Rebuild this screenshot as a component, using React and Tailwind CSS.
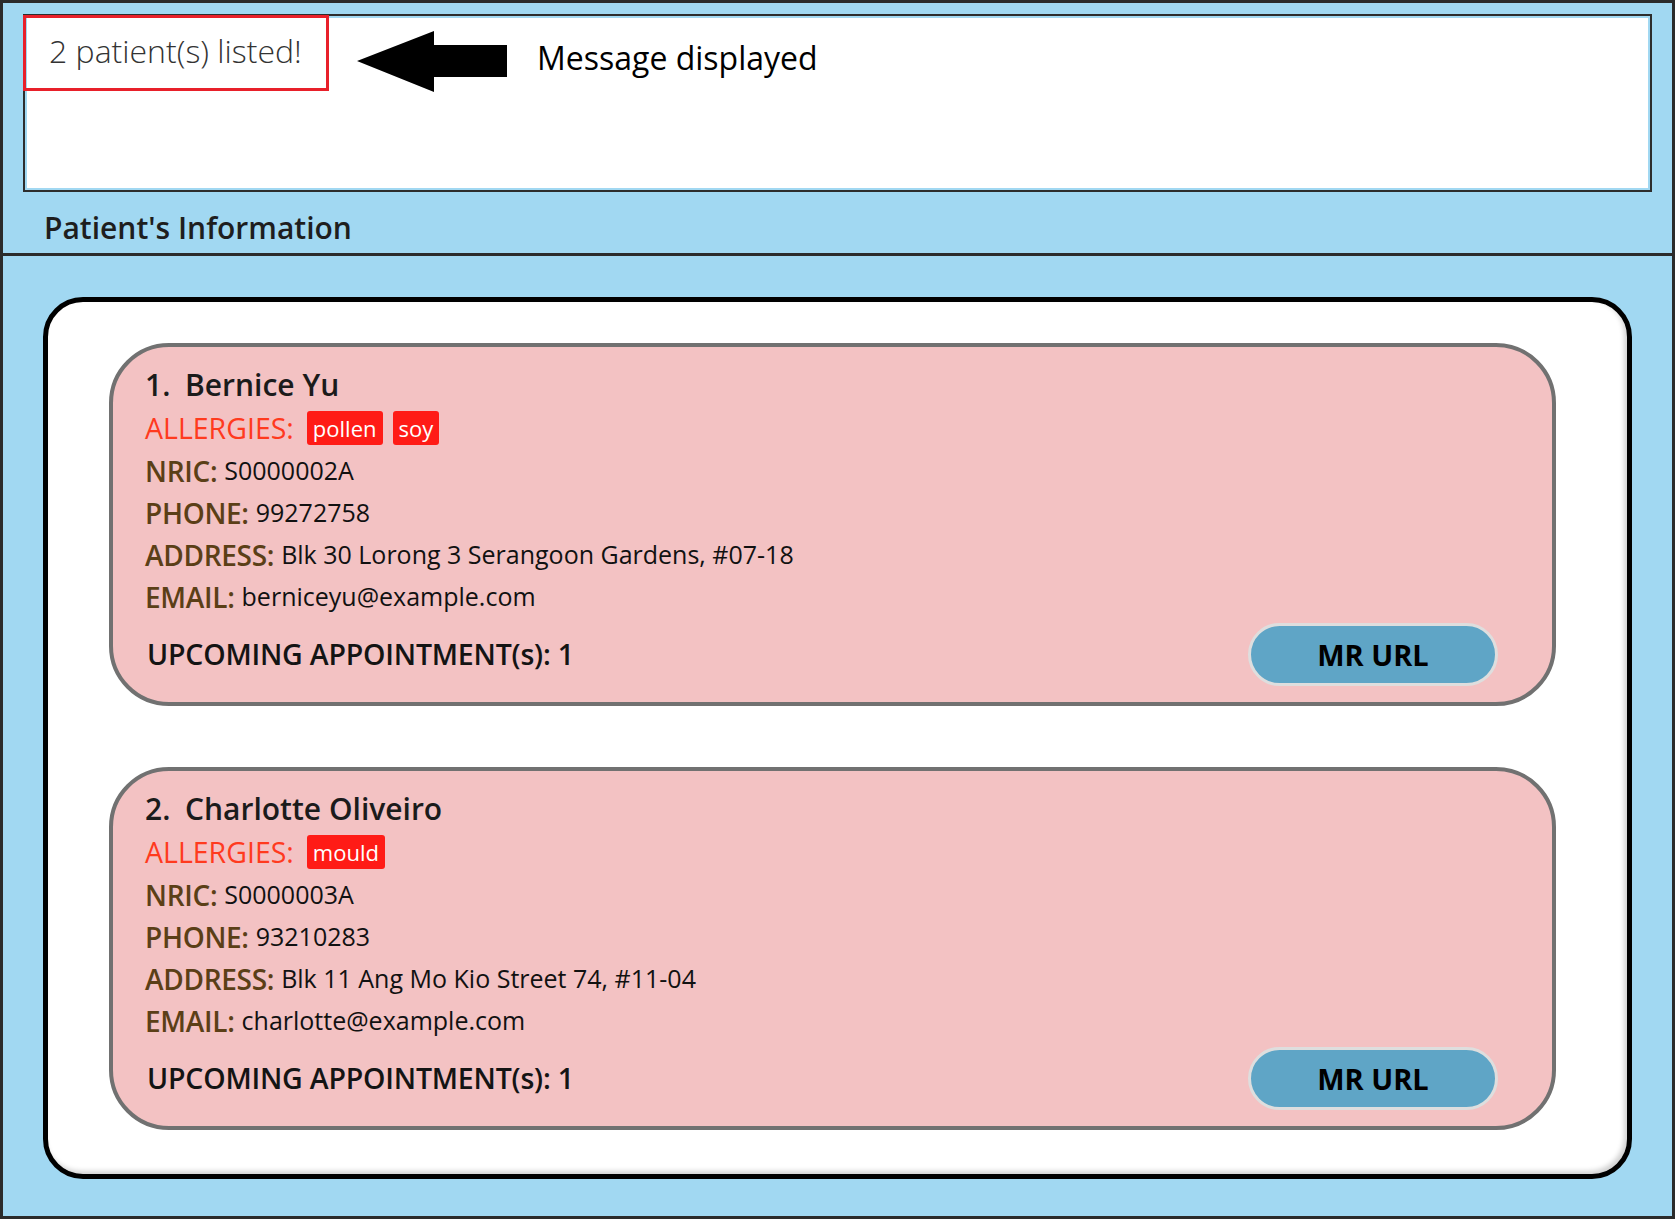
import React from "react";

const patients = [
  {
    name: "Bernice Yu",
    allergies: ["pollen", "soy"],
    nric: "S0000002A",
    phone: "99272758",
    address: "Blk 30 Lorong 3 Serangoon Gardens, #07-18",
    email: "berniceyu@example.com",
    appointments: 1,
  },
  {
    name: "Charlotte Oliveiro",
    allergies: ["mould"],
    nric: "S0000003A",
    phone: "93210283",
    address: "Blk 11 Ang Mo Kio Street 74, #11-04",
    email: "charlotte@example.com",
    appointments: 1,
  },
];

function Field({ label, value }) {
  return (
    <div className="flex h-[42px] items-center gap-[7px]">
      <span className="text-[28px] font-semibold tracking-[-0.3px] text-[#5b3f17]">{label}</span>
      <span className="text-[25px] text-[#111]">{value}</span>
    </div>
  );
}

function PatientCard({ index, patient }) {
  return (
    <div className="rounded-[60px] border-4 border-[#717171] bg-[#f3c2c3] pt-[15px] pb-[16px] pl-[32px] pr-[54px]">
      <div className="flex h-[44px] items-center text-[30px] font-semibold text-[#1b1b1b]">
        <span className="w-[40px]">{index}.</span>
        <span>{patient.name}</span>
      </div>
      <div className="flex h-[44px] items-center gap-[13px]">
        <span className="text-[28.5px] font-medium text-[#ff3a1e]">ALLERGIES:</span>
        <div className="flex gap-[10px]">
          {patient.allergies.map((a) => (
            <span key={a} className="rounded-[3px] bg-[#ff1b16] px-[6px] text-[22px] leading-[34px] text-white">
              {a}
            </span>
          ))}
        </div>
      </div>
      <Field label="NRIC:" value={patient.nric} />
      <Field label="PHONE:" value={patient.phone} />
      <Field label="ADDRESS:" value={patient.address} />
      <Field label="EMAIL:" value={patient.email} />
      <div className="mt-[5px] flex h-[63px] items-center justify-between">
        <span className="pl-[2px] text-[28.5px] font-semibold tracking-[-0.2px] text-[#141414]">
          UPCOMING APPOINTMENT(s): {patient.appointments}
        </span>
        <button className="flex h-[63px] w-[250px] items-center justify-center rounded-full border-[3px] border-[#dedede] bg-[#5fa5c6] text-[29px] font-bold text-black">
          MR URL
        </button>
      </div>
    </div>
  );
}

export default function App() {
  return (
    <div
      className="flex h-[1219px] w-[1675px] flex-col border-[3px] border-[#2b2b2b] bg-[#a1d8f2]"
      style={{ fontFamily: '"Open Sans", "Noto Sans", sans-serif' }}
    >
      {/* result display */}
      <div className="px-[20px] pt-[11px]">
        <div className="relative h-[178px] border-2 border-[#2d2d2d] bg-[#a1d8f2] p-[2px]">
          <div className="h-full bg-white pl-[22px] pt-[9px]">
            <span className="text-[32px] font-light text-[#333]">2 patient(s) listed!</span>
          </div>
          <div className="absolute left-[-2px] top-[-1px] h-[76px] w-[306px] border-[3px] border-[#e8202a]" />
          <svg className="absolute left-[332px] top-[15px]" width="151" height="62" viewBox="0 0 151 62">
            <polygon points="0,30 77,0 77,14 150,14 150,46 77,46 77,61" fill="#000" />
          </svg>
          <span className="absolute left-[512px] top-[18px] text-[32px] text-black">Message displayed</span>
        </div>
      </div>

      <div className="flex h-[61px] items-center pl-[41px] pt-[10px] text-[30px] font-semibold text-[#1e1e1e]">
        Patient's Information
      </div>
      <div className="h-[3px] bg-[#2b2b2b]" />

      {/* patient list */}
      <div className="flex-1 px-[40px] pt-[41px] pb-[37px]">
        <div className="flex h-full flex-col gap-[61px] rounded-[40px] border-[5px] border-black bg-white pt-[41px] pl-[61px] pr-[71px] shadow-[inset_-3px_-3px_5px_rgba(0,0,0,0.18)]">
          {patients.map((p, i) => (
            <PatientCard key={p.nric} index={i + 1} patient={p} />
          ))}
        </div>
      </div>
    </div>
  );
}
